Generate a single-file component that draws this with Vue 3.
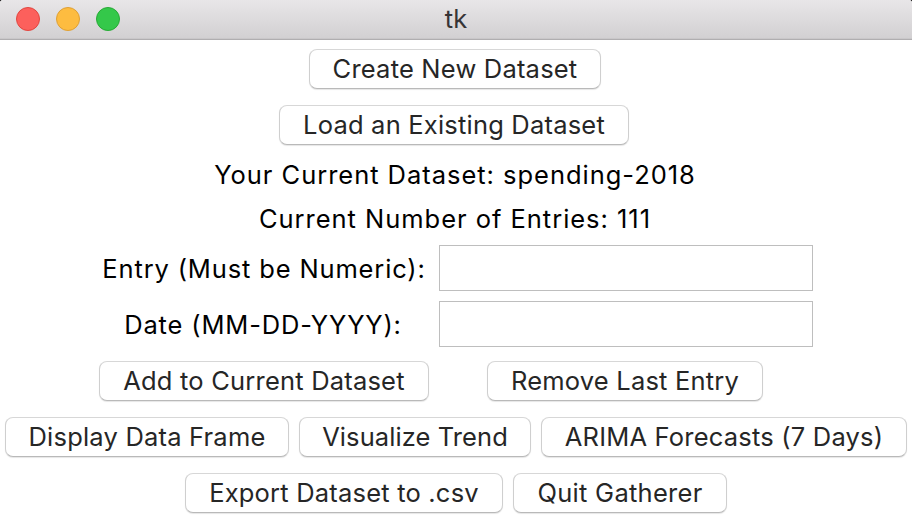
<script setup>
import { ref } from 'vue'

const entry = ref('')
const date = ref('')
</script>

<template>
  <div class="window">
    <header class="titlebar">
      <div class="lights">
        <span class="light close"></span>
        <span class="light minimize"></span>
        <span class="light zoom"></span>
      </div>
      <h1 class="title">tk</h1>
    </header>

    <main class="content">
      <div class="row row-create"><button class="btn create">Create New Dataset</button></div>
      <div class="row row-load"><button class="btn load">Load an Existing Dataset</button></div>
      <p class="info dataset">Your Current Dataset: spending-2018</p>
      <p class="info count">Current Number of Entries: 111</p>
      <div class="field">
        <label class="label" for="entry">Entry (Must be Numeric):</label>
        <input id="entry" v-model="entry" class="input" type="text" />
      </div>
      <div class="field">
        <label class="label date" for="date">Date (MM-DD-YYYY):</label>
        <input id="date" v-model="date" class="input" type="text" />
      </div>
      <div class="row row-edit">
        <button class="btn add">Add to Current Dataset</button>
        <button class="btn remove">Remove Last Entry</button>
      </div>
      <div class="row">
        <button class="btn display">Display Data Frame</button>
        <button class="btn visualize">Visualize Trend</button>
        <button class="btn arima">ARIMA Forecasts (7 Days)</button>
      </div>
      <div class="row">
        <button class="btn export">Export Dataset to .csv</button>
        <button class="btn quit">Quit Gatherer</button>
      </div>
    </main>
  </div>
</template>

<style>
body {
  margin: 0;
  background: #000;
}
</style>

<style scoped>
.window {
  width: 912px;
  height: 520px;
  overflow: hidden;
  box-sizing: border-box;
  border-radius: 3px 3px 0 0;
  background: #fff;
  font-family: Inter, "Liberation Sans", sans-serif;
  font-size: 25.5px;
  color: #000;
}
.titlebar {
  display: grid;
  grid-template-columns: 1fr auto 1fr;
  align-items: center;
  height: 40px;
  padding: 0 16px 4px;
  box-sizing: border-box;
  background: linear-gradient(#e8e6e8, #d1cfd1);
  box-shadow: inset 0 -1px #b0aeb0, inset 0 -2px #c9c7c9;
}
.lights {
  display: flex;
  gap: 16px;
}
.light {
  width: 24px;
  height: 24px;
  box-sizing: border-box;
  border: 1px solid;
  border-radius: 50%;
}
.close {
  background: #fc605c;
  border-color: #e2463f;
}
.minimize {
  background: #fdbc40;
  border-color: #dfa034;
}
.zoom {
  background: #34c84a;
  border-color: #27aa35;
}
.title {
  margin: 0;
  font-size: 25.5px;
  line-height: 38px;
  font-weight: 400;
  color: #363436;
}
.row {
  display: flex;
  justify-content: center;
  gap: 10px;
  height: 56px;
  padding-top: 9px;
  box-sizing: border-box;
}
.row-create {
  padding-right: 2px;
}
.row-load {
  padding-right: 4px;
}
.row-edit {
  gap: 58px;
  padding-right: 50px;
}
.btn {
  height: 40px;
  padding: 0;
  border: 1px solid;
  border-color: #d7d7d7 #cfcfcf #b9b9b9;
  border-radius: 8px;
  background: #fff;
  box-shadow: 0 1px 1px rgba(0, 0, 0, 0.1);
  font: inherit;
  line-height: 38px;
  letter-spacing: 0.2px;
  color: #262626;
  white-space: nowrap;
}
.create { width: 292px; }
.load { width: 350px; }
.add { width: 330px; }
.remove { width: 276px; }
.display { width: 284px; }
.visualize { width: 232px; letter-spacing: 0.08px; }
.arima { width: 366px; }
.export { width: 318px; }
.quit { width: 214px; letter-spacing: 0.28px; }
.info {
  margin: 0;
  height: 44px;
  padding-right: 2px;
  line-height: 46px;
  letter-spacing: 0.97px;
  text-align: center;
  white-space: nowrap;
}
.field {
  display: flex;
  height: 56px;
  padding: 5px 0 5px 89px;
  box-sizing: border-box;
}
.label {
  width: 350px;
  line-height: 48px;
  letter-spacing: 0.85px;
  text-align: center;
  white-space: nowrap;
}
.date {
  padding-right: 2px;
  box-sizing: border-box;
}
.input {
  width: 374px;
  height: 46px;
  padding: 0 8px;
  box-sizing: border-box;
  border: 1px solid #bebebe;
  border-radius: 0;
  outline: none;
  background: #fff;
  font: inherit;
}
</style>
